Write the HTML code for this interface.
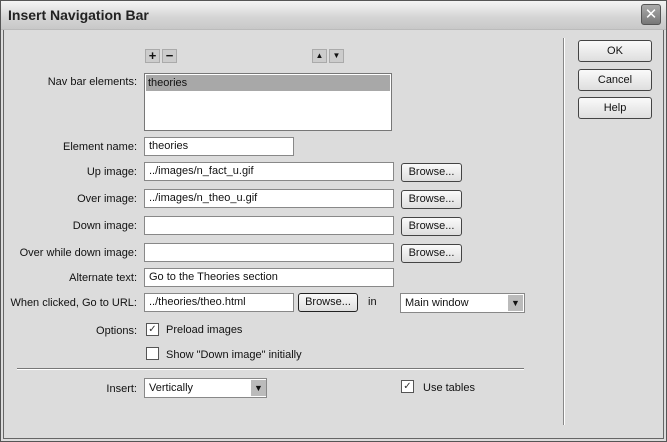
<!DOCTYPE html>
<html><head><style>
*{box-sizing:border-box;margin:0;padding:0}
body{width:667px;height:442px;background:#dcdcdc;font-family:"Liberation Sans",sans-serif;font-size:11px;color:#111;position:relative;overflow:hidden}
.a{position:absolute}
.frame{left:0;top:0;width:667px;height:442px;border:1px solid #555;background:#dcdcdc}
.title{left:1px;top:1px;width:665px;height:29px;background:linear-gradient(#f4f4f4,#d4d4d4 60%,#c8c8c8);border-bottom:1px solid #bbb}
.title span{position:absolute;left:7px;top:6px;font-size:14px;font-weight:bold;color:#222}
.body{left:3px;top:30px;width:661px;height:409px;border:1px solid #666;border-top:none}
.close{left:641px;top:4px;width:20px;height:21px;background:linear-gradient(#aaa,#777);border:1px solid #555;border-radius:3px;color:#fff;font-size:15px;text-align:center;line-height:19px}
.lbl{text-align:right;width:200px;line-height:14px;font-size:11px}
.in{background:#fff;border:1px solid #888;height:19px;padding:0 4px;line-height:17px}
.btn{background:linear-gradient(#fafafa,#dedede);border:1px solid #444;border-radius:3px;text-align:center;height:19px;line-height:17px}
.bb{width:61px}
.cb{width:13px;height:13px;background:#fff;border:1px solid #555;font-size:10px;line-height:11px;text-align:center;color:#333}
.sm{width:15px;height:14px;background:#ccc;border:1px solid #aaa;text-align:center;line-height:11px;font-weight:bold;font-size:13px}
</style></head><body>
<div class="a frame"></div>
<div class="a title"><span>Insert Navigation Bar</span></div>
<div class="a close">✕</div>
<div class="a body"></div>

<div class="a sm" style="left:145px;top:49px">+</div>
<div class="a sm" style="left:162px;top:49px">−</div>
<div class="a sm" style="left:312px;top:49px;font-size:8px;line-height:12px">▲</div>
<div class="a sm" style="left:329px;top:49px;font-size:8px;line-height:12px">▼</div>

<div class="a lbl" style="left:-63px;top:75px">Nav bar elements:</div>
<div class="a" style="left:144px;top:73px;width:248px;height:58px;background:#fff;border:1px solid #777"></div>
<div class="a" style="left:146px;top:75px;width:244px;height:16px;background:#a8a8a8;padding-left:2px;line-height:17px">theories</div>

<div class="a lbl" style="left:-63px;top:140px">Element name:</div>
<div class="a in" style="left:144px;top:137px;width:150px">theories</div>

<div class="a lbl" style="left:-63px;top:165px">Up image:</div>
<div class="a in" style="left:144px;top:162px;width:250px">../images/n_fact_u.gif</div>
<div class="a btn bb" style="left:401px;top:163px">Browse...</div>

<div class="a lbl" style="left:-63px;top:192px">Over image:</div>
<div class="a in" style="left:144px;top:189px;width:250px">../images/n_theo_u.gif</div>
<div class="a btn bb" style="left:401px;top:190px">Browse...</div>

<div class="a lbl" style="left:-63px;top:219px">Down image:</div>
<div class="a in" style="left:144px;top:216px;width:250px"></div>
<div class="a btn bb" style="left:401px;top:217px">Browse...</div>

<div class="a lbl" style="left:-63px;top:246px">Over while down image:</div>
<div class="a in" style="left:144px;top:243px;width:250px"></div>
<div class="a btn bb" style="left:401px;top:244px">Browse...</div>

<div class="a lbl" style="left:-63px;top:271px">Alternate text:</div>
<div class="a in" style="left:144px;top:268px;width:250px">Go to the Theories section</div>

<div class="a lbl" style="left:-63px;top:296px">When clicked, Go to URL:</div>
<div class="a in" style="left:144px;top:293px;width:150px">../theories/theo.html</div>
<div class="a btn" style="left:298px;top:293px;width:60px;border-color:#222">Browse...</div>
<div class="a" style="left:368px;top:296px">in</div>
<div class="a in" style="left:400px;top:293px;width:125px;height:20px;line-height:18px">Main window</div>
<div class="a" style="left:508px;top:295px;width:15px;height:16px;background:#bbb;text-align:center;font-size:9px;line-height:16px">▼</div>

<div class="a lbl" style="left:-63px;top:324px">Options:</div>
<div class="a cb" style="left:146px;top:323px">✓</div>
<div class="a" style="left:166px;top:324px">Preload images</div>
<div class="a cb" style="left:146px;top:347px"></div>
<div class="a" style="left:166px;top:349px">Show "Down image" initially</div>

<div class="a" style="left:17px;top:368px;width:507px;height:2px;border-top:1px solid #777;border-bottom:1px solid #fff"></div>

<div class="a lbl" style="left:-63px;top:382px">Insert:</div>
<div class="a in" style="left:144px;top:378px;width:123px;height:20px;line-height:18px">Vertically</div>
<div class="a" style="left:251px;top:380px;width:15px;height:16px;background:#bbb;text-align:center;font-size:9px;line-height:16px">▼</div>
<div class="a cb" style="left:401px;top:380px">✓</div>
<div class="a" style="left:423px;top:382px">Use tables</div>

<div class="a" style="left:563px;top:38px;width:2px;height:387px;border-left:1px solid #888;border-right:1px solid #fff"></div>

<div class="a btn" style="left:578px;top:40px;width:74px;height:22px;line-height:20px">OK</div>
<div class="a btn" style="left:578px;top:69px;width:74px;height:22px;line-height:20px">Cancel</div>
<div class="a btn" style="left:578px;top:97px;width:74px;height:22px;line-height:20px">Help</div>
</body></html>
